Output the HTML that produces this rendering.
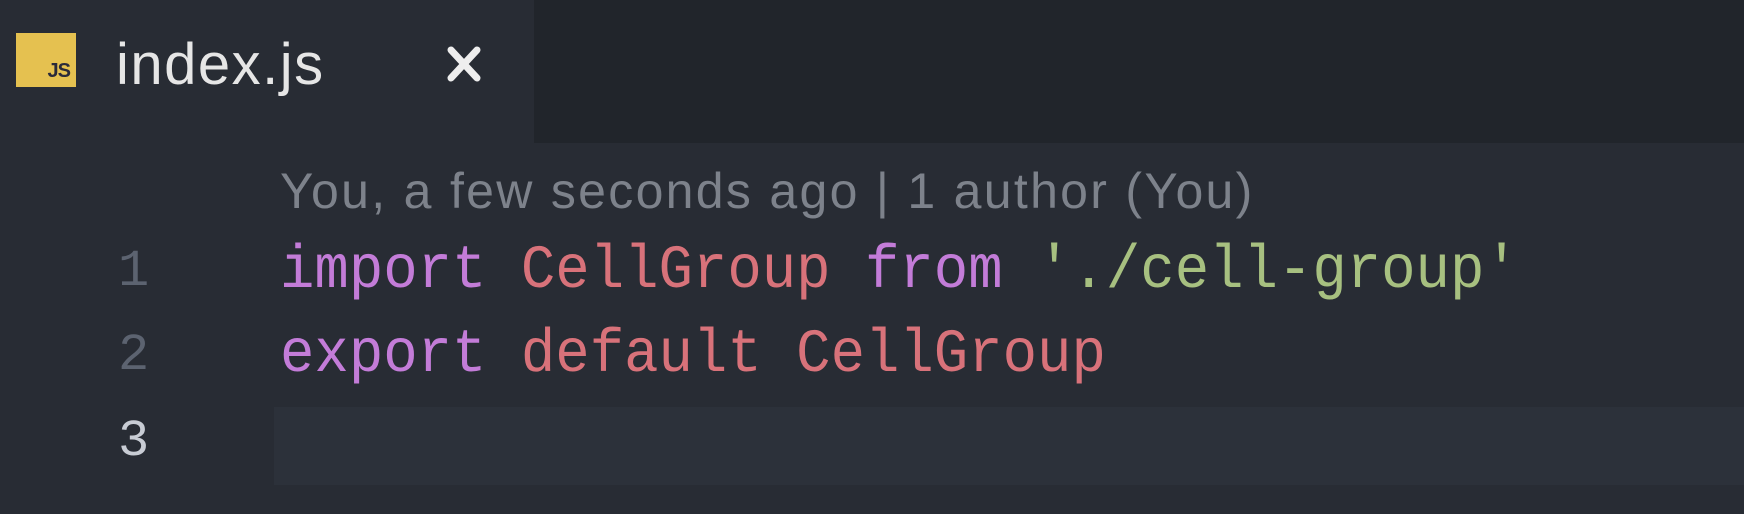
<!DOCTYPE html>
<html><head><meta charset="utf-8"><style>
html,body{margin:0;padding:0;}
body{width:1744px;height:514px;background:#282c34;position:relative;overflow:hidden;font-family:"Liberation Sans",sans-serif;}
.bar{position:absolute;left:0;top:0;width:1744px;height:143px;background:#21252b;}
.tab{position:absolute;left:0;top:0;width:534px;height:143px;background:#282c34;}
.icon{position:absolute;left:16px;top:33px;width:60px;height:54px;background:#e5c150;}
.icon span{position:absolute;right:6px;bottom:4px;font:bold 20px "Liberation Sans",sans-serif;color:#2a2a3a;letter-spacing:-1px;}
.title{position:absolute;left:116px;top:30px;font-size:58px;color:#e6e6e6;line-height:70px;letter-spacing:1.5px;}
.x{position:absolute;left:443px;top:44px;}
.blame{position:absolute;left:280px;top:161px;font-size:50px;color:#7d828b;line-height:60px;white-space:nowrap;letter-spacing:2.3px;}
.hl{position:absolute;left:274px;top:407px;width:1470px;height:78px;background:#2c313a;}
.code{position:absolute;left:280px;font-family:"Liberation Mono",monospace;font-size:61px;line-height:80px;white-space:pre;transform:scaleX(0.94);transform-origin:0 0;}
.ln{position:absolute;left:118px;font-family:"Liberation Mono",monospace;font-size:52px;line-height:80px;color:#5c6370;}
.k{color:#c37cd8}.r{color:#d8727a}.s{color:#a7c080}
</style></head><body>
<div class="bar"></div>
<div class="tab">
<div class="icon"><span>JS</span></div>
<div class="title">index.js</div>
<svg class="x" width="42" height="40" viewBox="0 0 42 40"><path d="M8 6 L34 34 M34 6 L8 34" stroke="#eeeeee" stroke-width="7" stroke-linecap="round"/></svg>
</div>
<div class="hl"></div>
<div class="blame">You, a few seconds ago | 1 author (You)</div>
<div class="ln" style="top:232px">1</div>
<div class="ln" style="top:316px">2</div>
<div class="ln" style="top:402px;color:#c8ccd4">3</div>
<div class="code" style="top:232px"><span class="k">import</span> <span class="r">CellGroup</span> <span class="k">from</span> <span class="s">'./cell-group'</span></div>
<div class="code" style="top:316px"><span class="k">export</span> <span class="r">default</span> <span class="r">CellGroup</span></div>
</body></html>
